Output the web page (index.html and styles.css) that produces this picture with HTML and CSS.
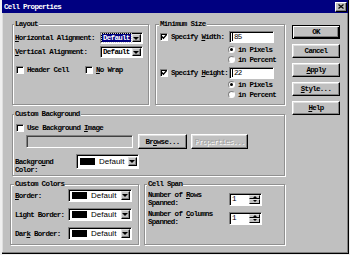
FILE: index.html
```html
<!DOCTYPE html>
<html>
<head>
<meta charset="utf-8">
<title>Cell Properties</title>
<link rel="stylesheet" href="styles.css">
</head>
<body>
<div class="dialog">
  <div class="titlebar">
    <span class="title">Cell Properties</span>
    <span class="close"><svg width="6" height="5" viewBox="0 0 6 5"><path d="M0.5 0.5 L5.5 4.5 M5.5 0.5 L0.5 4.5" stroke="#000" stroke-width="1.2" fill="none"/></svg></span>
  </div>
  <div class="content">
    <div class="main">
      <div class="row">
        <div class="group g-layout">
          <div class="legend">Layout</div>
          <div class="lrow r1">
            <span class="lbl w85"><u>H</u>orizontal Alignment:</span>
            <span class="select"><span class="val"><span class="hl">Default</span></span><span class="drop"></span></span>
          </div>
          <div class="lrow r2">
            <span class="lbl w85"><u>V</u>ertical Alignment:</span>
            <span class="select"><span class="val">Default</span><span class="drop"></span></span>
          </div>
          <div class="lrow r3">
            <span class="check cb-l"></span><span class="cblbl w58">Header Cell</span>
            <span class="check"></span><span class="cblbl"><u>N</u>o Wrap</span>
          </div>
        </div>
        <div class="group g-min">
          <div class="legend">Minimum Size</div>
          <div class="lrow ma">
            <span class="mfirst"><span class="check on"><svg width="6" height="6" viewBox="0 0 6 6"><path d="M0.8 2.6 L2.4 4.3 L5.4 0.9" stroke="#000" stroke-width="1.4" fill="none"/></svg></span><span class="cblbl">Specify <u>W</u>idth:</span></span>
            <span class="input w45"><span class="caret"></span>85</span>
          </div>
          <div class="lrow mr m1"><span class="radio on"></span><span class="rlbl">in Pixels</span></div>
          <div class="lrow mr m2"><span class="radio"></span><span class="rlbl">in Percent</span></div>
          <div class="lrow ma mb">
            <span class="mfirst"><span class="check on"><svg width="6" height="6" viewBox="0 0 6 6"><path d="M0.8 2.6 L2.4 4.3 L5.4 0.9" stroke="#000" stroke-width="1.4" fill="none"/></svg></span><span class="cblbl">Specify <u>H</u>eight:</span></span>
            <span class="input w45"><span class="caret"></span>22</span>
          </div>
          <div class="lrow mr m2"><span class="radio on"></span><span class="rlbl">in Pixels</span></div>
          <div class="lrow mr m2"><span class="radio"></span><span class="rlbl">in Percent</span></div>
        </div>
      </div>

      <div class="group g-bg">
        <div class="legend">Custom Background</div>
        <div class="lrow bg1"><span class="check cb-l"></span><span class="cblbl">Use Background <u>I</u>mage</span></div>
        <div class="lrow bg2">
          <span class="input dis w107"></span>
          <span class="btn b-browse">Br<u>o</u>wse...</span>
          <span class="btn disabled b-prop">Properties...</span>
        </div>
        <div class="lrow bg3">
          <span class="lbl2">Backgro<u>u</u>nd<br>Color:</span>
          <span class="cselect c-bg"><span class="swatch"></span><span class="ctext">Default</span><span class="drop"></span></span>
        </div>
      </div>

      <div class="row row3">
        <div class="group g-cc">
          <div class="legend">Custom Colors</div>
          <div class="lrow cc cc1"><span class="lbl w53"><u>B</u>order:</span><span class="cselect c-cc"><span class="swatch"></span><span class="ctext">Default</span><span class="drop"></span></span></div>
          <div class="lrow cc cc2"><span class="lbl w53">Light Border:</span><span class="cselect c-cc"><span class="swatch"></span><span class="ctext">Default</span><span class="drop"></span></span></div>
          <div class="lrow cc cc2"><span class="lbl w53">Dar<u>k</u> Border:</span><span class="cselect c-cc"><span class="swatch"></span><span class="ctext">Default</span><span class="drop"></span></span></div>
        </div>
        <div class="group g-cs">
          <div class="legend">Cell Span</div>
          <div class="lrow cs cs1">
            <span class="lbl2 w81">Number of <u>R</u>ows<br>Spanned:</span>
            <span class="spin"><span class="v">1</span><span class="spinbtns"><span class="up"></span><span class="dn"></span></span></span>
          </div>
          <div class="lrow cs cs2">
            <span class="lbl2 w81">Number of <u>C</u>olumns<br>Spanned:</span>
            <span class="spin"><span class="v">1</span><span class="spinbtns"><span class="up"></span><span class="dn"></span></span></span>
          </div>
        </div>
      </div>
    </div>

    <div class="buttons">
      <span class="btn default">OK</span>
      <span class="btn">Cancel</span>
      <span class="btn"><u>A</u>pply</span>
      <span class="btn"><u>S</u>tyle...</span>
      <span class="btn"><u>H</u>elp</span>
    </div>
  </div>
</div>
</body>
</html>
```

FILE: styles.css
```css
* { box-sizing: border-box; }
html, body { margin: 0; padding: 0; }
body { background: #f0f0f0; width: 350px; height: 255px; overflow: hidden; }

.dialog {
  margin-left: 2px;
  width: 347px;
  height: 254px;
  background: #c0c0c0;
  border-right: 1px solid #000;
  border-bottom: 1px solid #000;
  box-shadow: inset -1px -1px 0 #808080, inset 1px 0 0 #dfdfdf;
  font-family: "Liberation Mono", monospace;
  font-size: 7.5px;
  font-weight: bold;
  line-height: 8px;
  letter-spacing: -0.7px;
  color: #000;
  display: flex;
  flex-direction: column;
}

.titlebar {
  height: 13px;
  flex: none;
  background: #000080;
  color: #fff;
  display: flex;
  align-items: center;
  justify-content: space-between;
  padding: 0 1px 0 2px;
}
.close {
  width: 12px;
  height: 10px;
  background: #c0c0c0;
  border: 1px solid;
  border-color: #fff #000 #000 #fff;
  box-shadow: inset -1px -1px 0 #808080;
  display: flex;
  align-items: center;
  justify-content: center;
}
.close svg { display: block; }

.content { display: flex; padding: 11px 0 0 10px; }
.main { width: 273px; flex: none; display: flex; flex-direction: column; }
.row { display: flex; }
.row3 { margin-top: 8px; }

.group {
  border: 1px solid #909090;
  box-shadow: inset 1px 1px 0 #fff, 1px 1px 0 #fff;
  flex: none;
}
.legend {
  width: max-content;
  background: #c0c0c0;
  padding: 0 1px;
  margin: -4px 0 0 -1px;
  height: 7px;
  line-height: 7px;
}

.lrow { display: flex; align-items: center; }
.lbl, .cblbl, .rlbl { white-space: nowrap; }
.w85 { width: 85px; flex: none; }
.w58 { width: 58px; flex: none; }
.w53 { width: 53px; flex: none; }
.w81 { width: 81px; flex: none; }

/* Layout group */
.g-layout { width: 137px; height: 81px; padding: 0 2px; }
.r1 { margin-top: 4px; height: 12px; }
.r2 { margin-top: 2px; height: 12px; }
.r3 { margin-top: 7px; height: 9px; }
.cb-l { margin-left: 1px; }
.check + .cblbl { margin-left: 3px; }

/* Minimum size group */
.g-min { width: 130px; height: 81px; margin-left: 6px; padding: 0 4px; }
.ma { margin-top: 3px; height: 12px; }
.mb { margin-top: 3px; }
.mfirst { width: 68px; flex: none; display: flex; align-items: center; }
.mr { height: 9px; padding-left: 68px; }
.m1 { margin-top: 2px; }
.m2 { margin-top: 1px; }
.rlbl { margin-left: 3px; }

/* Controls */
.check {
  width: 8px;
  height: 8px;
  flex: none;
  background: #fff;
  border: 1px solid;
  border-color: #808080 #fff #fff #808080;
  box-shadow: inset 1px 1px 0 #000;
  display: flex;
  align-items: center;
  justify-content: center;
}
.check svg { display: block; }
.radio {
  width: 7px;
  height: 7px;
  flex: none;
  border-radius: 50%;
  background: #fff;
  border: 1px solid;
  border-color: #808080 #fff #fff #808080;
  display: flex;
  align-items: center;
  justify-content: center;
}
.radio.on::after {
  content: "";
  width: 3px;
  height: 3px;
  border-radius: 50%;
  background: #000;
}

.input {
  height: 12px;
  background: #fff;
  border: 1px solid;
  border-color: #808080 #fff #fff #808080;
  box-shadow: inset 1px 1px 0 #000;
  display: flex;
  align-items: center;
  padding-left: 2px;
  flex: none;
  font-weight: normal;
}
.w45 { width: 45px; margin-left: 1px; }
.w107 { width: 107px; margin-left: 11px; height: 13px; }
.input.dis { background: #c0c0c0; box-shadow: inset 1px 1px 0 #404040; }
.caret { width: 1px; height: 8px; background: #000; margin-right: 1px; }

.select {
  display: flex;
  width: 43px;
  height: 12px;
  flex: none;
  background: #fff;
  border: 1px solid;
  border-color: #808080 #fff #fff #808080;
  box-shadow: inset 1px 1px 0 #000;
  padding: 1px 1px 1px 2px;
}
.val { flex: 1; display: flex; align-items: center; }
.hl { background: #000080; color: #fff; outline: 1px dotted #ccc; padding: 0 1px; margin-left: -1px; }
.drop {
  width: 9px;
  flex: none;
  align-self: stretch;
  background: #c0c0c0;
  border: 1px solid;
  border-color: #dfdfdf #000 #000 #dfdfdf;
  box-shadow: inset -1px -1px 0 #808080;
  display: flex;
  align-items: center;
  justify-content: center;
}
.drop::after {
  content: "";
  border-left: 3px solid transparent;
  border-right: 3px solid transparent;
  border-top: 3px solid #000;
  margin-right: 1px;
}

.cselect {
  display: flex;
  align-items: center;
  flex: none;
  background: #fff;
  border: 1px solid;
  border-color: #808080 #fff #fff #808080;
  box-shadow: inset 1px 1px 0 #000;
  padding: 1px 1px 1px 3px;
}
.swatch { width: 15px; height: 7px; background: #000; flex: none; }
.ctext {
  flex: 1;
  font-family: "Liberation Sans", Arial, sans-serif;
  font-size: 8px;
  font-weight: normal;
  letter-spacing: 0;
  margin-left: 4px;
  line-height: 9px;
}

/* Custom background */
.g-bg { margin-top: 9px; height: 62px; padding: 0 2px; }
.bg1 { margin-top: 6px; height: 8px; }
.bg2 { margin-top: 2px; height: 15px; }
.bg3 { margin-top: 5px; height: 15px; align-items: flex-start; }
.lbl2 { white-space: nowrap; flex: none; }
.bg3 .lbl2 { width: 61px; margin-top: 4px; }
.c-bg { width: 63px; height: 15px; }
.c-bg .drop { margin: 1px 0; }

.btn {
  display: flex;
  align-items: center;
  justify-content: center;
  flex: none;
  height: 14px;
  background: #c0c0c0;
  border: 1px solid;
  border-color: #fff #000 #000 #fff;
  box-shadow: inset -1px -1px 0 #808080, inset 1px 1px 0 #dfdfdf;
  white-space: nowrap;
}
.btn.default {
  border-color: #000;
  box-shadow: inset 1px 1px 0 #fff, inset -1px -1px 0 #000, inset -2px -2px 0 #808080;
}
.b-browse { width: 49px; height: 15px; margin-left: 5px; }
.b-prop { width: 57px; height: 15px; margin-left: 4px; }
.btn.disabled { color: #a0a0a0; text-shadow: 1px 1px 0 #fff; font-weight: normal; }

/* Custom colors */
.g-cc { width: 129px; height: 61px; margin-left: -2px; padding: 0 4px; }
.cc { height: 13px; }
.cc1 { margin-top: 1px; }
.cc2 { margin-top: 6px; }
.c-cc { width: 64px; height: 13px; }

/* Cell span */
.g-cs { width: 141px; height: 61px; margin-left: 5px; padding: 0 3px; }
.cs { height: 16px; margin-top: 3px; }
.spin {
  display: flex;
  width: 33px;
  height: 13px;
  flex: none;
  background: #fff;
  border: 1px solid;
  border-color: #808080 #fff #fff #808080;
  box-shadow: inset 1px 1px 0 #000;
  padding: 1px;
  font-weight: normal;
}
.spin .v { flex: 1; padding-left: 1px; display: flex; align-items: center; }
.spinbtns { width: 11px; flex: none; display: flex; flex-direction: column; }
.spinbtns span {
  flex: 1;
  background: #c0c0c0;
  border: 1px solid;
  border-color: #dfdfdf #000 #000 #dfdfdf;
  display: flex;
  align-items: center;
  justify-content: center;
}
.spinbtns .up::after {
  content: "";
  border-left: 2px solid transparent;
  border-right: 2px solid transparent;
  border-bottom: 2px solid #000;
}
.spinbtns .dn::after {
  content: "";
  border-left: 2px solid transparent;
  border-right: 2px solid transparent;
  border-top: 2px solid #000;
}

/* Buttons column */
.buttons {
  margin-left: 7px;
  width: 48px;
  flex: none;
  display: flex;
  flex-direction: column;
  gap: 5px;
  padding-top: 1px;
}
.buttons .btn { width: 48px; }
```
